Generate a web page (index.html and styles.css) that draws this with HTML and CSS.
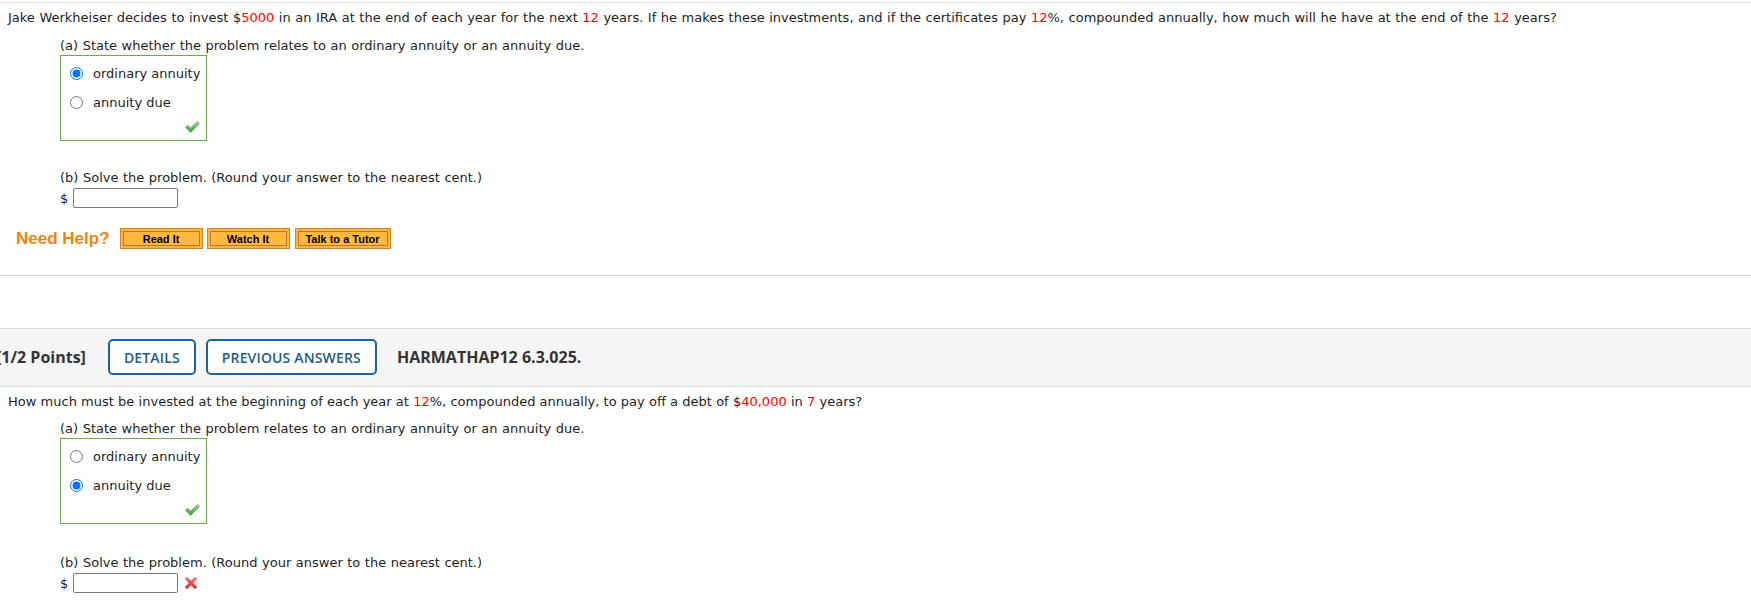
FILE: index.html
```html
<!DOCTYPE html>
<html>
<head>
<meta charset="utf-8">
<title>Annuity questions</title>
<link rel="stylesheet" href="styles.css">
</head>
<body>
<div class="page">
  <section class="question first">
    <p class="qtext">Jake Werkheiser decides to invest $<span class="v">5000</span> in an IRA at the end of each year for the next <span class="v">12</span> years. If he makes these investments, and if the certificates pay <span class="v">12</span>%, compounded annually, how much will he have at the end of the <span class="v">12</span> years?</p>
    <div class="parts">
      <p class="part-a">(a) State whether the problem relates to an ordinary annuity or an annuity due.</p>
      <div class="choices">
        <label class="choice"><input type="radio" name="q1" checked><span>ordinary annuity</span></label>
        <label class="choice second"><input type="radio" name="q1"><span>annuity due</span></label>
        <div class="mark">
          <svg width="15" height="12" viewBox="0 0 15 12"><defs><linearGradient id="ck1" x1="0" y1="0" x2="0" y2="1"><stop offset="0" stop-color="#a6d98a"/><stop offset="1" stop-color="#3d9440"/></linearGradient></defs><path d="M0.5 6.3 L2.8 4.2 L5.6 6.9 L12.6 0.4 L14.6 2.4 L5.6 11.6 Z" fill="url(#ck1)" stroke="#4f9a45" stroke-width="0.6"/></svg>
        </div>
      </div>
      <p class="part-b">(b) Solve the problem. (Round your answer to the nearest cent.)</p>
      <div class="answer"><span class="dollar">$</span><input class="field" type="text"></div>
    </div>
    <div class="help">
      <span class="help-label">Need Help?</span>
      <button class="hbtn read"><span>Read It</span></button>
      <button class="hbtn watch"><span>Watch It</span></button>
      <button class="hbtn tutor"><span>Talk to a Tutor</span></button>
    </div>
  </section>

  <div class="band">
    <span class="points">[1/2 Points]</span>
    <button class="tab">DETAILS</button>
    <button class="tab">PREVIOUS ANSWERS</button>
    <span class="code">HARMATHAP12 6.3.025.</span>
  </div>

  <section class="question second-q">
    <p class="qtext">How much must be invested at the beginning of each year at <span class="v">12</span>%, compounded annually, to pay off a debt of $<span class="v">40,000</span> in <span class="v">7</span> years?</p>
    <div class="parts">
      <p class="part-a">(a) State whether the problem relates to an ordinary annuity or an annuity due.</p>
      <div class="choices">
        <label class="choice"><input type="radio" name="q2"><span>ordinary annuity</span></label>
        <label class="choice second"><input type="radio" name="q2" checked><span>annuity due</span></label>
        <div class="mark">
          <svg width="15" height="12" viewBox="0 0 15 12"><defs><linearGradient id="ck2" x1="0" y1="0" x2="0" y2="1"><stop offset="0" stop-color="#a6d98a"/><stop offset="1" stop-color="#3d9440"/></linearGradient></defs><path d="M0.5 6.3 L2.8 4.2 L5.6 6.9 L12.6 0.4 L14.6 2.4 L5.6 11.6 Z" fill="url(#ck2)" stroke="#4f9a45" stroke-width="0.6"/></svg>
        </div>
      </div>
      <p class="part-b">(b) Solve the problem. (Round your answer to the nearest cent.)</p>
      <div class="answer"><span class="dollar">$</span><input class="field" type="text">
        <svg class="wrong" width="14" height="14" viewBox="0 0 14 14"><defs><linearGradient id="xg" x1="0" y1="0" x2="0" y2="1"><stop offset="0" stop-color="#f47a72"/><stop offset="1" stop-color="#d8262a"/></linearGradient></defs><path d="M0.8 3 L3 0.8 L7 4.8 L11 0.8 L13.2 3 L9.2 7 L13.2 11 L11 13.2 L7 9.2 L3 13.2 L0.8 11 L4.8 7 Z" fill="url(#xg)"/></svg>
      </div>
    </div>
  </section>
</div>
</body>
</html>
```

FILE: styles.css
```css
* { box-sizing: border-box; }

body {
  margin: 0;
  background: #fff;
  font-family: "DejaVu Sans", Verdana, sans-serif;
  font-size: 13px;
  color: #1e1e1e;
}

.page { padding-top: 2px; }

p { margin: 0; line-height: 18px; white-space: nowrap; word-spacing: 0.4px; }

.question.first {
  border-top: 1px solid #e2e2e2;
  padding-top: 6px;
  padding-bottom: 26px;
  border-bottom: 1px solid #d4d4d4;
}

.qtext { padding-left: 8px; }

.v { color: #ff0000; }

.parts { padding-left: 60px; }

.part-a { margin-top: 10px; }

.choices {
  width: 147px;
  border: 1px solid #6aaa4a;
  padding: 4px 6px 7px 9px;
}

.choice {
  display: flex;
  align-items: center;
  height: 26px;
  white-space: nowrap;
}
.choice.second { margin-top: 3px; }

.choice input {
  margin: 0 10px 0 0;
  width: 13px;
  height: 13px;
  flex: none;
}

.mark {
  margin-top: 6px;
  height: 12px;
  display: flex;
  justify-content: flex-end;
}
.mark svg { display: block; }

.part-b { margin-top: 28px; }

.answer {
  margin-top: 1px;
  height: 20px;
  display: flex;
  align-items: center;
}

.dollar { width: 13px; }

.field {
  width: 105px;
  height: 20px;
  border: 1px solid #7a7a7a;
  border-radius: 2px;
  background: #fff;
  padding: 0 3px;
  margin: 0;
  font: inherit;
}

.wrong { margin-left: 6px; display: block; }

.help {
  margin-top: 20px;
  padding-left: 16px;
  display: flex;
  align-items: center;
  height: 21px;
}

.help-label {
  font-family: "Liberation Sans", Arial, sans-serif;
  font-weight: bold;
  font-size: 17px;
  color: #ef8511;
  margin-right: 10px;
}

.hbtn {
  height: 21px;
  margin: 0 5px 0 0;
  padding: 2px;
  border: 1px solid #cf8530;
  background: #fdb23a;
  font-family: "Liberation Sans", Arial, sans-serif;
  font-weight: bold;
  font-size: 11px;
  color: #000;
  display: flex;
}
.hbtn span {
  flex: 1;
  display: flex;
  align-items: center;
  justify-content: center;
  border: 1px solid #b9782d;
  background: #ffb940;
}
.hbtn.read { width: 83px; margin-right: 4px; }
.hbtn.watch { width: 83px; margin-right: 5px; }
.hbtn.tutor { width: 96px; }

.band {
  margin-top: 52px;
  background: #f5f5f5;
  border-top: 1px solid #dedede;
  border-bottom: 1px solid #dedede;
  padding: 10px 0 11px;
  display: flex;
  align-items: center;
  font-family: "Open Sans", sans-serif;
}

.points {
  margin-left: -4px;
  font-weight: 700;
  font-size: 16px;
  color: #333;
}

.tab {
  height: 36px;
  margin: 0 0 0 22px;
  padding: 0 14px;
  border: 2px solid #17659b;
  border-radius: 5px;
  background: #fff;
  font-family: "Open Sans", sans-serif;
  font-weight: 600;
  font-size: 14px;
  letter-spacing: 0.15px;
  color: #245b87;
}
.tab + .tab { margin-left: 10px; }

.code {
  margin-left: 20px;
  font-weight: 700;
  font-size: 16px;
  color: #333;
}

.second-q .qtext { margin-top: 6px; word-spacing: 0.1px; }
.second-q .part-a { margin-top: 9px; }
.second-q .part-b { margin-top: 30px; }
```
